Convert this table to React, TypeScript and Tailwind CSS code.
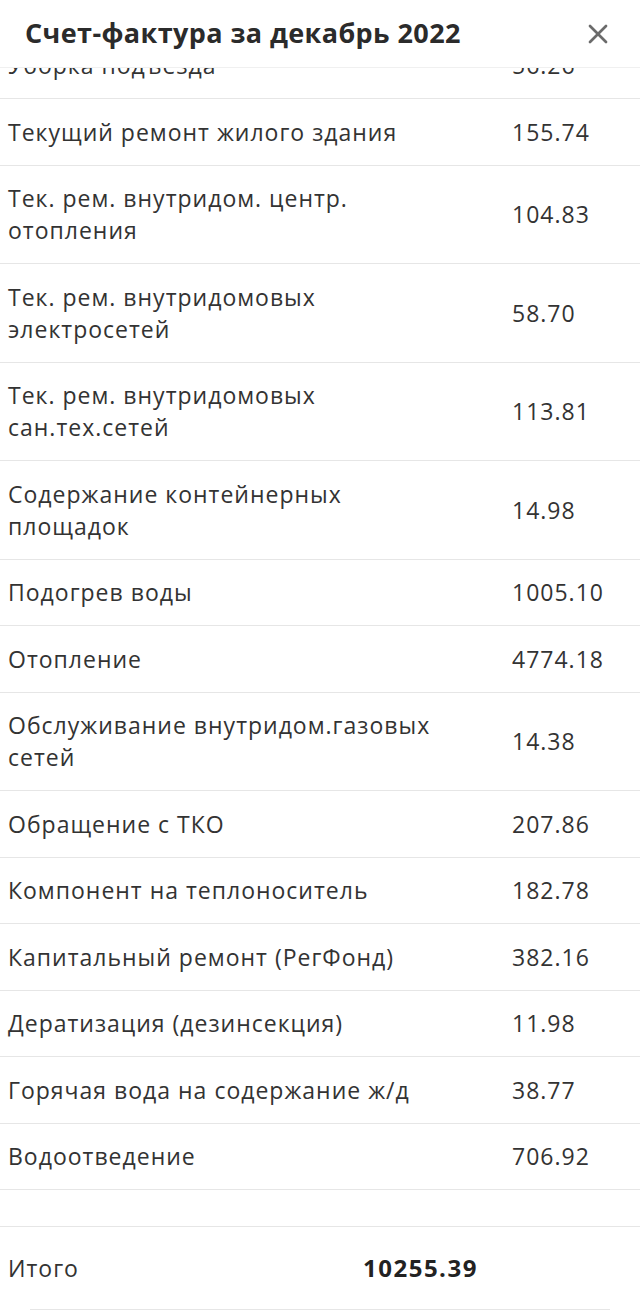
import { X } from "lucide-react";

// Строка счета
interface Row {
  name: string;
  sum: string;
}

const ROWS: Row[] = [
  { name: "Текущий ремонт жилого здания", sum: "155.74" },
  { name: "Тек. рем. внутридом. центр. отопления", sum: "104.83" },
  { name: "Тек. рем. внутридомовых электросетей", sum: "58.70" },
  { name: "Тек. рем. внутридомовых сан.тех.сетей", sum: "113.81" },
  { name: "Содержание контейнерных площадок", sum: "14.98" },
  { name: "Подогрев воды", sum: "1005.10" },
  { name: "Отопление", sum: "4774.18" },
  { name: "Обслуживание внутридом.газовых сетей", sum: "14.38" },
  { name: "Обращение с ТКО", sum: "207.86" },
  { name: "Компонент на теплоноситель", sum: "182.78" },
  { name: "Капитальный ремонт (РегФонд)", sum: "382.16" },
  { name: "Дератизация (дезинсекция)", sum: "11.98" },
  { name: "Горячая вода на содержание ж/д", sum: "38.77" },
  { name: "Водоотведение", sum: "706.92" },
];

function InvoiceRow({ row }: { row: Row }) {
  return (
    <div className="flex items-center border-b border-[#e6e6e6] py-[16.75px] text-[23px] leading-[32px] tracking-[1px] text-[#333]">
      <div className="w-[512px] pl-2 pr-[44px]">{row.name}</div>
      <div className="flex-1">{row.sum}</div>
    </div>
  );
}

export default function App() {
  return (
    <div
      className="h-[1316px] w-[640px] overflow-hidden bg-white"
      style={{ fontFamily: "'Open Sans', Lato, sans-serif" }}
    >
      {/* Заголовок */}
      <div className="relative z-10 flex h-[68px] items-center justify-between border-b border-[#f0f0f0] bg-white pl-[25px] pr-[26px]">
        <h1 className="text-[27px] font-bold tracking-[0.4px] text-[#2b2b2b]">
          Счет-фактура за декабрь 2022
        </h1>
        <X className="h-[32px] w-[32px] text-[#6b6b6b]" strokeWidth={2} />
      </div>

      {/* Прокрученная строка */}
      <div className="flex h-[31px] flex-col justify-end overflow-hidden">
        <InvoiceRow row={{ name: "Уборка подъезда", sum: "56.26" }} />
      </div>

      {ROWS.map((row) => (
        <InvoiceRow key={row.name} row={row} />
      ))}

      <div className="h-[37px] border-b border-[#e6e6e6]" />

      {/* Итого */}
      <div className="flex items-center py-[25px] text-[23px] leading-[32px] tracking-[1px] text-[#333]">
        <div className="w-[363px] pl-2">Итого</div>
        <div className="text-[24px] font-bold tracking-[1.5px] text-[#222]">
          10255.39
        </div>
      </div>
      <div className="mx-[30px] border-b border-[#e6e6e6]" />
    </div>
  );
}
